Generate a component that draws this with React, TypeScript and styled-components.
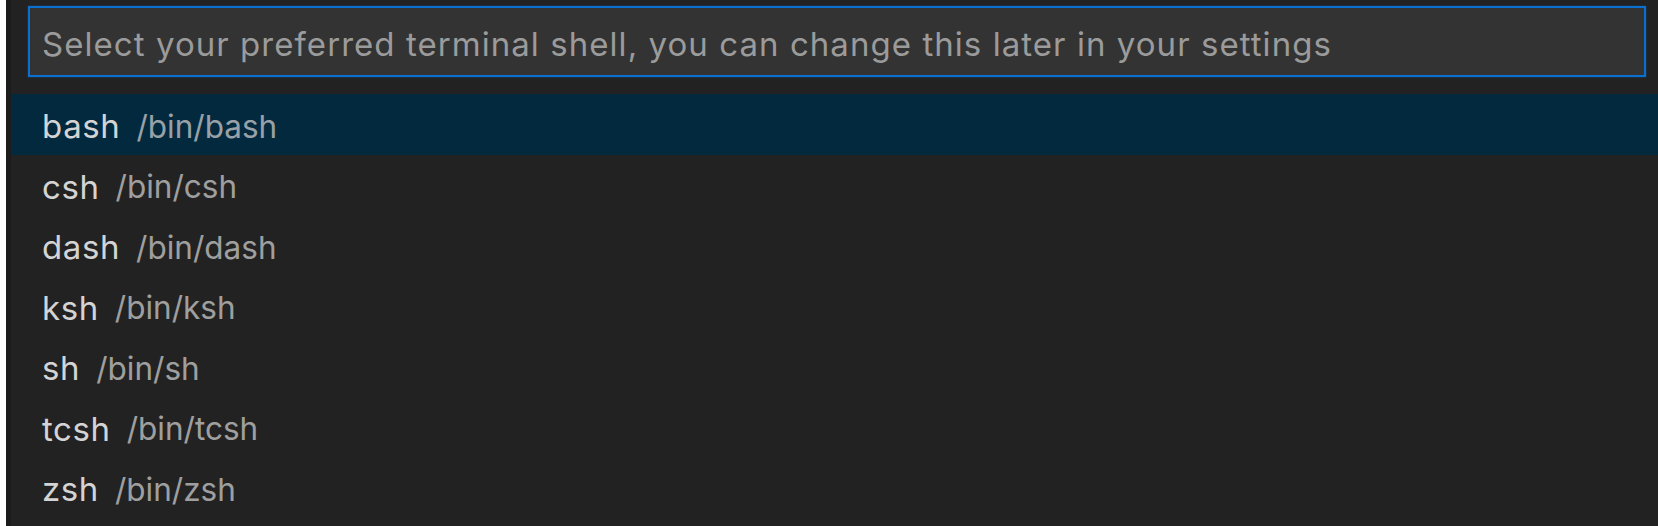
import React from "react";
import styled, { createGlobalStyle } from "styled-components";

const Global = createGlobalStyle`
  html, body { margin: 0; padding: 0; background: #ffffff; }
  body { font-family: Inter, "Liberation Sans", Arial, sans-serif; }
`;

const Page = styled.div`
  display: flex;
  height: 526px;
  overflow: hidden;
  padding-left: 6px;
  background: #ffffff;
`;

const EditorStrip = styled.div`
  width: 5px;
  background: #1c1c1c;
  flex: none;
`;

const Panel = styled.div`
  flex: 1;
  min-width: 0;
  background: #222222;
  padding: 6px 12px 0 17px;
  display: flex;
  flex-direction: column;
`;

const InputBox = styled.div`
  height: 71px;
  box-sizing: border-box;
  border: 2px solid #0b6fcf;
  background: #333333;
  display: flex;
  align-items: center;
  padding: 4px 0 0 12px;
  box-shadow: 0 0 1px #0b6fcf;
`;

const Placeholder = styled.span`
  font-size: 33px;
  letter-spacing: 1.05px;
  color: #9b9b9b;
  white-space: nowrap;
`;

const List = styled.div`
  margin: 17px -12px 0 -17px;
  display: flex;
  flex-direction: column;
`;

const Row = styled.div<{ $selected?: boolean }>`
  height: 60.5px;
  display: flex;
  align-items: center;
  padding: 4px 0 0 31px;
  box-sizing: border-box;
  background: ${(p) => (p.$selected ? "#03293f" : "transparent")};
  white-space: nowrap;
`;

const Label = styled.span`
  font-size: 33px;
  letter-spacing: 0.6px;
  color: #d4d4d4;
`;

const Description = styled.span`
  font-size: 31.5px;
  color: #d0d0d0;
  opacity: 0.72;
  margin-left: 16px;
`;

const shells = ["bash", "csh", "dash", "ksh", "sh", "tcsh", "zsh"];

export default function App() {
  return (
    <>
      <Global />
      <Page>
        <EditorStrip />
        <Panel>
          <InputBox>
            <Placeholder>
              Select your preferred terminal shell, you can change this later in your settings
            </Placeholder>
          </InputBox>
          <List>
            {shells.map((s, i) => (
              <Row key={s} $selected={i === 0}>
                <Label>{s}</Label>
                <Description>/bin/{s}</Description>
              </Row>
            ))}
          </List>
        </Panel>
      </Page>
    </>
  );
}
